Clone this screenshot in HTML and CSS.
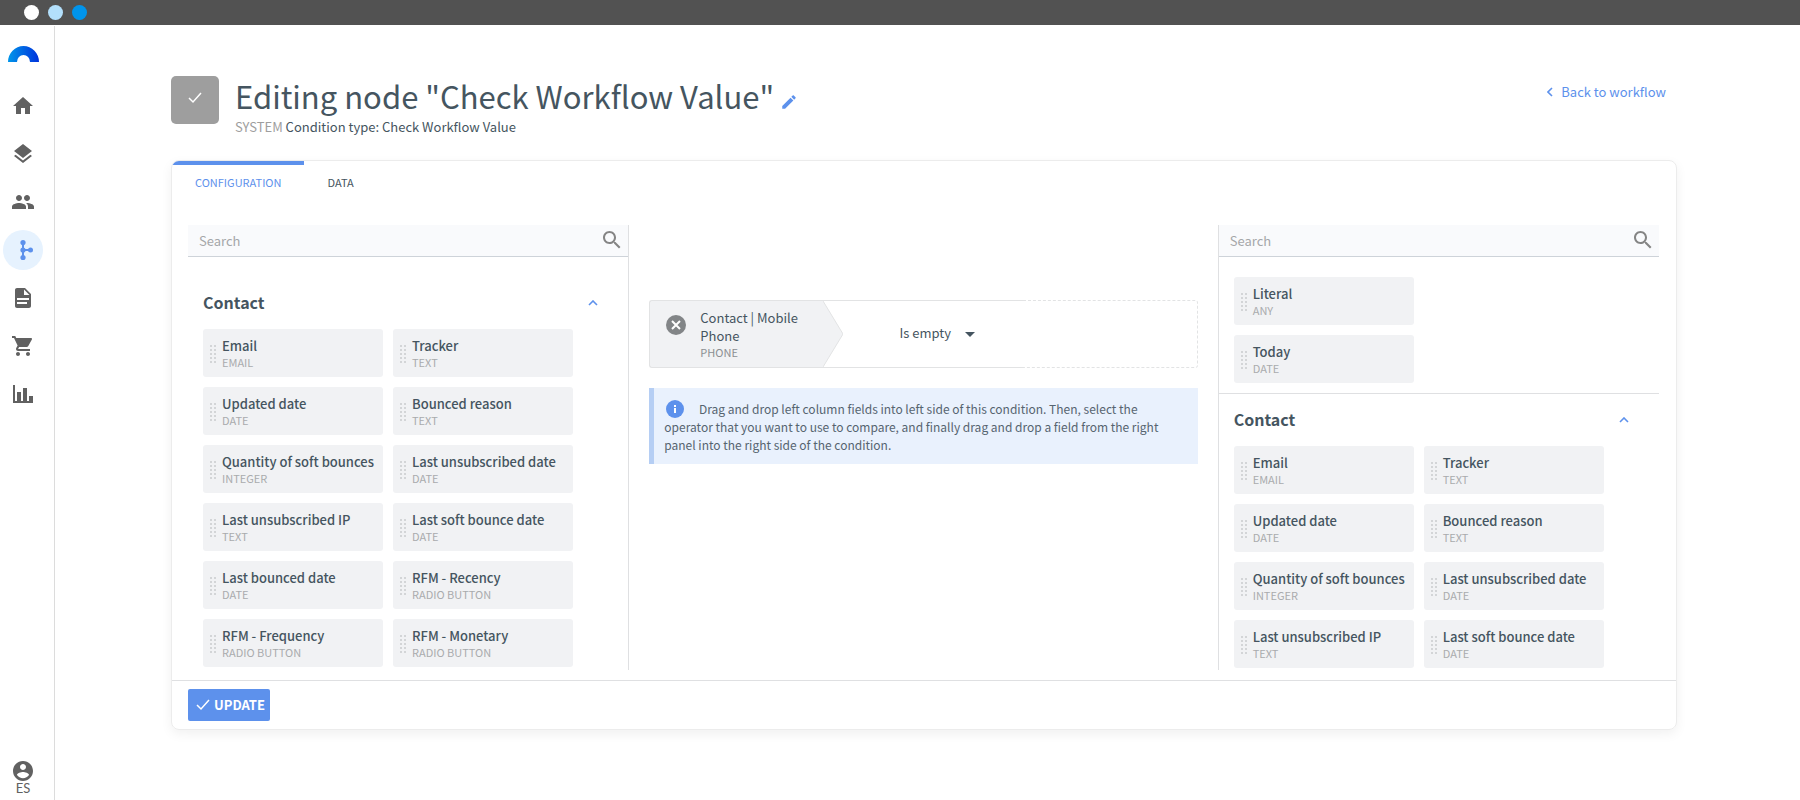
FILE: index.html
```html
<!DOCTYPE html>
<html lang="en">
<head>
  <meta charset="UTF-8" />
  <meta name="viewport" content="width=device-width, initial-scale=1.0" />
  <title>Editing node | Workflow</title>
  <link rel="stylesheet" href="styles.css">
</head>
<body>
  <div class="topbar">
    <span class="dot white"></span>
    <span class="dot light"></span>
    <span class="dot blue"></span>
  </div>

  <div class="shell">
    <nav class="sidebar">
      <svg class="logo" viewBox="0 0 31 16">
        <defs>
          <linearGradient id="arc" x1="0" y1="0" x2="1" y2="0">
            <stop offset="0" stop-color="#0096ea" />
            <stop offset="1" stop-color="#0032dc" />
          </linearGradient>
        </defs>
        <path fill="url(#arc)" d="M0 16a15.500 16 0 0 1 31 0h-9a6.500 7 0 0 0-13 0z" />
      </svg>
      <a class="nav-item" href="#" aria-label="Home"><svg viewBox="0 0 24 24"><path d="M10 20v-6h4v6h5v-8h3L12 3 2 12h3v8z" /></svg></a>
      <a class="nav-item" href="#" aria-label="Content"><svg viewBox="0 0 24 24"><path d="M11.990 18.540l-7.370-5.730L3 14.070l9 7 9-7-1.630-1.270zM12 16l7.360-5.730L21 9l-9-7-9 7 1.630 1.270z" /></svg></a>
      <a class="nav-item" href="#" aria-label="Contacts"><svg viewBox="0 0 24 24"><path d="M16 11c1.660 0 2.990-1.340 2.990-3S17.660 5 16 5s-3 1.340-3 3 1.340 3 3 3zm-8 0c1.660 0 2.990-1.340 2.990-3S9.660 5 8 5 5 6.340 5 8s1.340 3 3 3zm0 2c-2.330 0-7 1.170-7 3.500V19h14v-2.500c0-2.330-4.670-3.500-7-3.500zm8 0c-.290 0-.620.020-.970.050 1.160.840 1.970 1.970 1.970 3.450V19h6v-2.500c0-2.330-4.670-3.500-7-3.500z" /></svg></a>
      <a class="nav-item active" href="#" aria-label="Workflows"><svg viewBox="0 0 24 24"><path d="M11 4h2v16h-2zM12 11h8v2h-8z" /><circle cx="12" cy="4.500" r="2.600" /><circle cx="12" cy="12" r="2.600" /><circle cx="12" cy="19.500" r="2.600" /><circle cx="19.500" cy="12" r="2.500" /></svg></a>
      <a class="nav-item" href="#" aria-label="Documents"><svg viewBox="0 0 24 24"><path d="M14 2H6c-1.100 0-1.990.900-1.990 2L4 20c0 1.100.890 2 1.990 2H18c1.100 0 2-.900 2-2V8l-6-6zm2 16H6v-2h10v2zm2-4H6v-2h12v2zm-5-5V3.500L18.500 9H13z" /></svg></a>
      <a class="nav-item" href="#" aria-label="Store"><svg viewBox="0 0 24 24"><path d="M7 18c-1.100 0-1.990.900-1.990 2S5.900 22 7 22s2-.900 2-2-.900-2-2-2zM1 2v2h2l3.600 7.590-1.350 2.450c-.160.280-.250.610-.250.960 0 1.100.900 2 2 2h12v-2H7.420c-.140 0-.250-.110-.250-.250l.030-.120.900-1.630h7.450c.750 0 1.410-.410 1.750-1.030l3.580-6.490c.080-.140.120-.310.120-.480 0-.550-.450-1-1-1H5.210l-.940-2H1zm16 16c-1.100 0-1.990.900-1.990 2s.890 2 1.990 2 2-.900 2-2-.900-2-2-2z" /></svg></a>
      <a class="nav-item" href="#" aria-label="Reports"><svg viewBox="0 0 24 24"><path d="M2 3h2v16h2v-9h4v9h2V6h4v13h2v-5h4v7H2z" /></svg></a>
      <a class="user" href="#">
        <svg viewBox="0 0 24 24"><path d="M12 2C6.480 2 2 6.480 2 12s4.480 10 10 10 10-4.480 10-10S17.520 2 12 2zm0 3c1.660 0 3 1.340 3 3s-1.340 3-3 3-3-1.340-3-3 1.340-3 3-3zm0 14.200c-2.500 0-4.710-1.280-6-3.220.030-1.990 4-3.080 6-3.080 1.990 0 5.970 1.090 6 3.080-1.290 1.940-3.500 3.220-6 3.220z" /></svg>
        <span>ES</span>
      </a>
    </nav>

    <main class="main">
      <header class="page-header">
        <div class="node-icon"><svg viewBox="0 0 14 12"><path d="M1 6l4 4 8-9" /></svg></div>
        <div class="heading">
          <div class="title-row">
            <h1>Editing node "Check Workflow Value"</h1>
            <button class="edit" aria-label="Edit name"><svg viewBox="0 0 24 24"><path d="M3 17.250V21h3.750L17.810 9.940l-3.750-3.750L3 17.250zM20.710 7.040c.390-.390.390-1.020 0-1.410l-2.340-2.340c-.390-.390-1.020-.390-1.410 0l-1.830 1.830 3.750 3.750 1.830-1.830z" /></svg></button>
          </div>
          <p class="subtitle"><span class="muted">SYSTEM</span> Condition type: Check Workflow Value</p>
        </div>
        <a class="back" href="#"><svg viewBox="0 0 6 10"><path d="M5 1L1 5l4 4" /></svg>Back to workflow</a>
      </header>

      <section class="card">
        <div class="tabs">
          <button class="tab active">CONFIGURATION</button>
          <button class="tab">DATA</button>
        </div>

        <div class="columns">
          <div class="panel left">
            <div class="search">
              <input type="text" placeholder="Search" aria-label="Search left fields">
              <svg viewBox="0 0 24 24"><path d="M15.500 14h-.790l-.280-.270C15.410 12.590 16 11.110 16 9.500 16 5.910 13.090 3 9.500 3S3 5.910 3 9.500 5.910 16 9.500 16c1.610 0 3.090-.590 4.230-1.570l.270.280v.790l5 4.990L20.490 19l-4.990-5zm-6 0C7.010 14 5 11.990 5 9.500S7.010 5 9.500 5 14 7.010 14 9.500 11.990 14 9.500 14z" /></svg>
            </div>
            <div class="group">
              <button class="group-title"><span>Contact</span><svg viewBox="0 0 10 6"><path d="M1 5l4-4 4 4" /></svg></button>
              <div class="fields">
                <div class="field"><strong>Email</strong><small>EMAIL</small></div>
                <div class="field"><strong>Tracker</strong><small>TEXT</small></div>
                <div class="field"><strong>Updated date</strong><small>DATE</small></div>
                <div class="field"><strong>Bounced reason</strong><small>TEXT</small></div>
                <div class="field"><strong>Quantity of soft bounces</strong><small>INTEGER</small></div>
                <div class="field"><strong>Last unsubscribed date</strong><small>DATE</small></div>
                <div class="field"><strong>Last unsubscribed IP</strong><small>TEXT</small></div>
                <div class="field"><strong>Last soft bounce date</strong><small>DATE</small></div>
                <div class="field"><strong>Last bounced date</strong><small>DATE</small></div>
                <div class="field"><strong>RFM - Recency</strong><small>RADIO BUTTON</small></div>
                <div class="field"><strong>RFM - Frequency</strong><small>RADIO BUTTON</small></div>
                <div class="field"><strong>RFM - Monetary</strong><small>RADIO BUTTON</small></div>
              </div>
            </div>
          </div>

          <div class="center">
            <div class="condition">
              <div class="operand">
                <button class="remove" aria-label="Remove field"><svg viewBox="0 0 20 20"><circle cx="10" cy="10" r="10" /><path d="M6 6l8 8M14 6l-8 8" /></svg></button>
                <div class="operand-text">Contact | Mobile Phone<small>PHONE</small></div>
              </div>
              <div class="operator">
                <svg class="arrow" viewBox="0 0 20 66" preserveAspectRatio="none"><path d="M0 0l20 33L0 66" /></svg>
                <div class="select">
                  <select aria-label="Operator">
                    <option>Is empty</option>
                  </select>
                  <svg viewBox="0 0 10 5"><path d="M0 0h10L5 5z" /></svg>
                </div>
              </div>
              <div class="dropzone"></div>
            </div>
            <p class="info">
              <svg viewBox="0 0 18 18"><circle cx="9" cy="9" r="9" /><path d="M8 8h2v5H8zM8 5h2v2H8z" /></svg>
              Drag and drop left column fields into left side of this condition. Then, select the operator that you want to use to compare, and finally drag and drop a field from the right panel into the right side of the condition.
            </p>
          </div>

          <div class="panel right">
            <div class="search">
              <input type="text" placeholder="Search" aria-label="Search right fields">
              <svg viewBox="0 0 24 24"><path d="M15.500 14h-.790l-.280-.270C15.410 12.590 16 11.110 16 9.500 16 5.910 13.090 3 9.500 3S3 5.910 3 9.500 5.910 16 9.500 16c1.610 0 3.090-.590 4.230-1.570l.270.280v.790l5 4.990L20.490 19l-4.990-5zm-6 0C7.010 14 5 11.990 5 9.500S7.010 5 9.500 5 14 7.010 14 9.500 11.990 14 9.500 14z" /></svg>
            </div>
            <div class="fields single">
              <div class="field"><strong>Literal</strong><small>ANY</small></div>
              <div class="field"><strong>Today</strong><small>DATE</small></div>
            </div>
            <div class="group">
              <button class="group-title"><span>Contact</span><svg viewBox="0 0 10 6"><path d="M1 5l4-4 4 4" /></svg></button>
              <div class="fields">
                <div class="field"><strong>Email</strong><small>EMAIL</small></div>
                <div class="field"><strong>Tracker</strong><small>TEXT</small></div>
                <div class="field"><strong>Updated date</strong><small>DATE</small></div>
                <div class="field"><strong>Bounced reason</strong><small>TEXT</small></div>
                <div class="field"><strong>Quantity of soft bounces</strong><small>INTEGER</small></div>
                <div class="field"><strong>Last unsubscribed date</strong><small>DATE</small></div>
                <div class="field"><strong>Last unsubscribed IP</strong><small>TEXT</small></div>
                <div class="field"><strong>Last soft bounce date</strong><small>DATE</small></div>
              </div>
            </div>
          </div>
        </div>

        <footer class="card-footer">
          <button class="update"><svg viewBox="0 0 14 12"><path d="M1 6l4 4 8-9" /></svg>UPDATE</button>
        </footer>
      </section>
    </main>
  </div>
</body>
</html>
```

FILE: styles.css
```css
* {
  box-sizing: border-box;
}
body {
  margin: 0;
  min-height: 100vh;
  display: flex;
  flex-direction: column;
  background: #fff;
  color: #455560;
  font-family: "Noto Sans CJK SC", "Noto Sans", sans-serif;
  font-size: 13px;
  line-height: 18px;
}
svg {
  display: block;
}
button, input, select {
  font: inherit;
  color: inherit;
  border: none;
  background: none;
  padding: 0;
  margin: 0;
}
button {
  cursor: pointer;
}
a {
  text-decoration: none;
}

.topbar {
  display: flex;
  align-items: center;
  gap: 9px;
  height: 25px;
  padding-left: 24px;
  background: #525252;
}
.dot {
  width: 15px;
  height: 15px;
  border-radius: 50%;
}
.white { background: #fff; }
.light { background: #b3e0fc; }
.blue { background: #0094ec; }

.shell {
  flex: 1;
  display: flex;
}
.sidebar {
  display: flex;
  flex-direction: column;
  gap: 8px;
  width: 55px;
  margin-top: 1px;
  padding: 20px 0 4px 3px;
  border-right: 1px solid #dcdcdc;
}
.logo {
  width: 31px;
  height: 16px;
  margin: 0 0 16px 5px;
}
.nav-item {
  display: flex;
  align-items: center;
  justify-content: center;
  width: 40px;
  height: 40px;
  border-radius: 50%;
}
.nav-item svg, .user svg {
  width: 24px;
  height: 24px;
  fill: #616161;
}
.nav-item.active {
  background: #e6f2fe;
}
.nav-item.active svg {
  fill: #5d91ec;
}
.user {
  display: flex;
  flex-direction: column;
  align-items: center;
  width: 40px;
  margin-top: auto;
  color: #616161;
  font-family: Lato, sans-serif;
  line-height: 15px;
}
.user span {
  margin-top: -2px;
}

.main {
  flex: 1;
  padding: 51px 123px 70px 116px;
}
.page-header {
  display: flex;
  align-items: flex-start;
  gap: 16px;
  height: 84px;
}
.node-icon {
  display: flex;
  align-items: flex-start;
  justify-content: center;
  width: 48px;
  height: 48px;
  padding-top: 16px;
  border-radius: 5px;
  background: #9e9e9e;
}
.node-icon svg, .update svg {
  width: 14px;
  height: 12px;
  fill: none;
  stroke: #fff;
  stroke-width: 1.500;
}
.heading {
  flex: 1;
}
.title-row {
  display: flex;
  align-items: flex-end;
  gap: 6px;
}
h1 {
  margin: 0;
  padding-bottom: 2px;
  font-size: 31px;
  font-weight: 400;
  line-height: 40px;
}
.edit svg {
  width: 18px;
  height: 18px;
  margin-bottom: 7px;
  fill: #5d91ec;
}
.subtitle {
  margin: 0;
}
.muted {
  color: #9e9e9e;
}
.back {
  display: flex;
  align-items: center;
  gap: 8px;
  padding: 7px 11px 0 0;
  color: #5d91ec;
}
.back svg, .group-title svg {
  fill: none;
  stroke: #5d91ec;
  stroke-width: 1.600;
}
.back svg {
  width: 6px;
  height: 10px;
}

.card {
  border: 1px solid #ececec;
  border-radius: 8px;
  box-shadow: 0 4px 12px rgba(0, 0, 0, 0.06);
  overflow: hidden;
}
.tabs {
  display: flex;
  height: 44px;
}
.tab {
  padding: 0 23px 6px;
  border-top: 4px solid transparent;
  font-size: 11px;
}
.tab.active {
  color: #5d91ec;
  border-top-color: #5d91ec;
  border-bottom-right-radius: 3px;
}
.columns {
  display: grid;
  grid-template-columns: 3fr 4fr 3fr;
  padding: 20px 17px 10px 16px;
}
.panel {
  padding-bottom: 2px;
}
.left {
  border-right: 1px solid #dfe0e2;
}
.right {
  border-left: 1px solid #dfe0e2;
}
.search {
  display: flex;
  align-items: center;
  height: 32px;
  padding: 0 4px 0 11px;
  background: #f9fafc;
  border-bottom: 1px solid #ced3d9;
}
.search input {
  flex: 1;
  min-width: 0;
  outline: none;
}
.search input::placeholder {
  color: #a5a7a9;
}
.search svg {
  width: 24px;
  height: 24px;
  margin-bottom: 2px;
  fill: #858585;
}
.group {
  padding: 0 15px;
}
.left .group {
  padding-top: 20px;
}
.group-title {
  display: flex;
  align-items: center;
  justify-content: space-between;
  width: 100%;
  height: 52px;
  padding-right: 15px;
  font-size: 16px;
  font-weight: 700;
}
.group-title span {
  padding-bottom: 3px;
}
.group-title svg {
  width: 10px;
  height: 6px;
}
.fields {
  display: grid;
  grid-template-columns: 180px 180px;
  gap: 10px;
}
.single {
  grid-template-columns: 180px;
  padding: 20px 15px 10px;
  border-bottom: 1px solid #dfe0e2;
}
.field {
  position: relative;
  height: 48px;
  padding: 8px 8px 0 19px;
  border-radius: 3px;
  background: #f1f2f4;
  cursor: grab;
}
/* drag handle, two columns of dots */
.field::before {
  content: "";
  position: absolute;
  left: 7px;
  top: 16px;
  width: 7px;
  height: 18px;
  background: radial-gradient(circle at 1px 1px, #d3d5d7 1px, transparent 1px) 0 0 / 4px 4px;
}
.field strong, .field small {
  display: block;
  white-space: nowrap;
}
.field strong {
  font-weight: 500;
}
.field small {
  color: #a9abad;
  font-size: 11px;
  line-height: 14px;
}

.center {
  padding: 75px 20px 0;
}
.condition {
  display: grid;
  grid-template-columns: 1fr 200px 1fr;
  min-height: 68px;
}
.operand {
  display: flex;
  gap: 14px;
  padding: 8px 0 0 16px;
  border: 1px solid #e2e3e4;
  border-right: none;
  border-radius: 3px 0 0 3px;
  background: #f1f2f4;
}
.remove {
  align-self: flex-start;
  padding-top: 6px;
}
.remove svg {
  width: 20px;
  height: 20px;
  fill: #828587;
  stroke: none;
}
.remove path {
  stroke: #fff;
  stroke-width: 2;
}
.operand-text {
  flex: 1;
  padding-right: 24px;
}
.operand-text small {
  display: block;
  color: #8b8f92;
  font-size: 11px;
  line-height: 15px;
}
.operator {
  display: flex;
  align-items: center;
  border: solid #e2e3e4;
  border-width: 1px 0;
}
.arrow {
  width: 20px;
  height: 66px;
  margin-right: 56px;
  fill: #f1f2f4;
  stroke: #e2e3e4;
}
.select {
  display: grid;
  align-items: center;
}
.select select, .select svg {
  grid-area: 1 / 1;
}
.select select {
  width: 76px;
  padding-bottom: 2px;
  appearance: none;
  outline: none;
}
.select svg {
  justify-self: end;
  width: 10px;
  height: 5px;
  fill: #455560;
  pointer-events: none;
}
.dropzone {
  border: 1px dashed #e2e3e4;
  border-left: none;
  border-radius: 0 3px 3px 0;
}
.info {
  margin: 20px 0 0;
  padding: 12px 15px 10px 10px;
  border-left: 5px solid #b5cef4;
  background: #e9f1fd;
  color: #566470;
  font-size: 12px;
}
.info svg {
  display: inline-block;
  width: 18px;
  height: 18px;
  margin: -4px 12px 0 2px;
  vertical-align: middle;
  fill: #5d91ec;
}
.info path {
  fill: #fff;
}

.card-footer {
  padding: 8px 16px;
  border-top: 1px solid #dfe0e2;
}
.update {
  display: flex;
  align-items: center;
  gap: 4px;
  height: 32px;
  padding: 0 5px 0 8px;
  border-radius: 2px;
  background: #5d91ec;
  color: #fff;
  font-weight: 700;
}
```
